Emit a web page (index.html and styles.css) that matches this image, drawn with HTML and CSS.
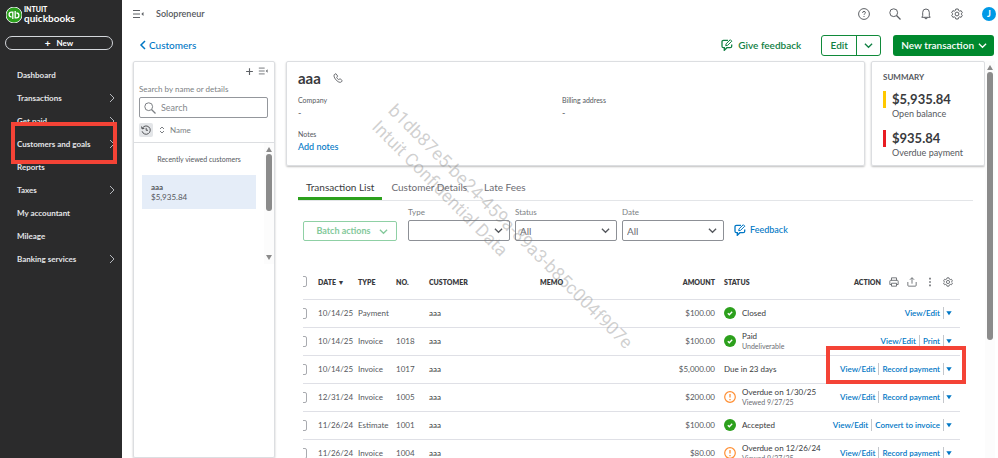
FILE: index.html
```
<!DOCTYPE html>
<html lang="en">
<head>
  <meta charset="UTF-8">
  <meta name="viewport" content="width=device-width, initial-scale=1.0">
  <title>QuickBooks - Customers</title>
  <link rel="stylesheet" href="styles.css">
</head>
<body>
  <!-- icons -->
  <svg class="sprite" aria-hidden="true">
    <symbol id="chev-right" viewBox="0 0 10 10"><path d="M3 1l4 4-4 4"/></symbol>
    <symbol id="chev-left" viewBox="0 0 10 10"><path d="M7 1L3 5l4 4" stroke-width="1.500"/></symbol>
    <symbol id="chev-down" viewBox="0 0 10 10"><path d="M1 3l4 4 4-4" stroke-width="1.400"/></symbol>
    <symbol id="caret" viewBox="0 0 6 6"><path d="M0.300 1.200h5.400L3 5.200z" fill="currentColor" stroke="none"/></symbol>
    <symbol id="collapse" viewBox="0 0 12 10"><path d="M1 1.500h7M1 5h7M1 8.500h7"/><path d="M11.500 3v4L9.300 5z" fill="currentColor" stroke="none"/></symbol>
    <symbol id="search" viewBox="0 0 12 12"><circle cx="4.700" cy="4.700" r="3.900"/><path d="M7.500 7.500l4 4" stroke-width="1.200"/></symbol>
    <symbol id="gear" viewBox="0 0 24 24"><circle cx="12" cy="12" r="3.800"/><path d="M9.600 2h4.800l.8 3 2.100 1.200 3-.8 2.400 4.100-2.200 2.200v.6l2.200 2.200-2.400 4.100-3-.8-2.100 1.200-.8 3H9.600l-.8-3-2.100-1.200-3 .8-2.400-4.100 2.200-2.200v-.6L1.300 9.500l2.400-4.100 3 .8L8.800 5z"/></symbol>
    <symbol id="feedback" viewBox="0 0 12 12"><path d="M7 1.300H2.500Q1 1.300 1 2.800v4.400q0 1.500 1.500 1.500h.8v2.600l2.600-2.600h3.300q1.500 0 1.500-1.500V5.500" stroke-width="1.300"/><path d="M4.700 6.700l.4-1.900L9.300.7l1.500 1.500-4.200 4.100z"/></symbol>
    <symbol id="done" viewBox="0 0 12 12"><circle cx="6" cy="6" r="6" fill="#2ca01c" stroke="none"/><path d="M3.800 6.200l1.500 1.500 2.900-3" stroke="#fff" stroke-width="1.300"/></symbol>
    <symbol id="warn" viewBox="0 0 12 12"><circle cx="6" cy="6" r="5.300" stroke="#ff8f33" stroke-width="1.200"/><path d="M6 2.900v3.700M6 8v1.200" stroke="#ff8f33" stroke-width="1.300"/></symbol>
  </svg>

  <aside class="sidebar">
    <div class="logo">
      <svg class="logo-mark" viewBox="0 0 16 16">
        <circle cx="8" cy="8" r="8" fill="#2ca01c"/>
        <path d="M6.800 12V5.200H5.500a2.300 2.300 0 0 0 0 4.800M9.200 4v6.800h1.300a2.300 2.300 0 0 0 0-4.800" stroke="#fff" stroke-width="1.300"/>
      </svg>
      <div class="logo-text"><span>INTUIT</span><strong>quickbooks</strong></div>
    </div>
    <button class="new-btn"><span>+</span> New</button>
    <nav>
      <ul class="menu">
        <li><a href="#">Dashboard</a></li>
        <li><a href="#">Transactions <svg><use href="#chev-right"/></svg></a></li>
        <li><a href="#">Get paid <svg><use href="#chev-right"/></svg></a></li>
        <li class="marked"><a href="#">Customers and goals <svg><use href="#chev-right"/></svg></a></li>
        <li><a href="#">Reports</a></li>
        <li><a href="#">Taxes <svg><use href="#chev-right"/></svg></a></li>
        <li><a href="#">My accountant</a></li>
        <li><a href="#">Mileage</a></li>
        <li><a href="#">Banking services <svg><use href="#chev-right"/></svg></a></li>
      </ul>
    </nav>
  </aside>

  <div class="app">
    <header class="topbar">
      <button class="icon-btn" aria-label="Collapse menu"><svg class="ic-12"><use href="#collapse"/></svg></button>
      <span class="company">Solopreneur</span>
      <div class="tools">
        <button class="icon-btn" aria-label="Help"><svg class="ic-12" viewBox="0 0 12 12"><circle cx="6" cy="6" r="5.400"/><path d="M4.600 4.900q0-1.500 1.400-1.500t1.400 1.300q0 .8-.8 1.200-.6.300-.6.900M6 8v1"/></svg></button>
        <button class="icon-btn" aria-label="Search"><svg class="ic-12"><use href="#search"/></svg></button>
        <button class="icon-btn" aria-label="Notifications"><svg class="ic-12" viewBox="0 0 12 12"><path d="M1.800 9.300h8.400L9.300 7.800V4.300a3.300 3.300 0 0 0-6.600 0v3.500zM4.700 9.500a1.300 1.300 0 0 0 2.600 0"/></svg></button>
        <button class="icon-btn" aria-label="Settings"><svg class="ic-12 thin"><use href="#gear"/></svg></button>
        <button class="avatar">J</button>
      </div>
    </header>

    <div class="page-head">
      <a class="back" href="#"><svg><use href="#chev-left"/></svg>Customers</a>
      <div class="head-actions">
        <a class="give-feedback" href="#"><svg class="ic-12"><use href="#feedback"/></svg>Give feedback</a>
        <div class="split">
          <button>Edit</button>
          <button aria-label="More edit options"><svg class="ic-8"><use href="#chev-down"/></svg></button>
        </div>
        <button class="primary">New transaction <svg class="ic-8"><use href="#chev-down"/></svg></button>
      </div>
    </div>

    <div class="content">
      <section class="card customers">
        <div class="customers-tools">
          <button class="icon-btn" aria-label="Add customer"><svg class="ic-8" viewBox="0 0 8 8"><path d="M4 1v6M1 4h6"/></svg></button>
          <button class="icon-btn" aria-label="Collapse list"><svg class="ic-10"><use href="#collapse"/></svg></button>
        </div>
        <div class="search">
          <label for="search">Search by name or details</label>
          <div class="search-box">
            <svg class="ic-12"><use href="#search"/></svg>
            <input type="text" id="search" placeholder="Search">
          </div>
        </div>
        <div class="sort">
          <button class="history" aria-label="Recent"><svg class="ic-10" viewBox="0 0 12 12"><path d="M1.500 4.200A5 5 0 1 1 1.300 7.500M.6 1.800l.7 2.800 2.700-.5M6.200 3.500v2.800h2.200"/></svg></button>
          <button class="sort-name"><svg class="ic-6" viewBox="0 0 6 8"><path d="M1 3l2-2 2 2M1 5l2 2 2-2"/></svg>Name</button>
        </div>
        <div class="list">
          <div class="list-body">
            <p>Recently viewed customers</p>
            <a class="customer" href="#"><strong>aaa</strong><span>$5,935.84</span></a>
          </div>
          <div class="scroll"><i class="arrow up"></i><i class="thumb"></i><i class="arrow down"></i></div>
        </div>
      </section>

      <main class="details">
        <div class="cards">
          <section class="card info">
            <div class="name">
              <h1>aaa</h1>
              <svg class="ic-10" viewBox="0 0 12 12"><path d="M3.500.8L1.500 2q-1 1.200.5 4 2 3.600 5 4.900 2 .8 3.100-.3l1-1.400-2.600-2.300-1.700 1q-1.600-.8-2.400-2.700l1.200-1.500z"/></svg>
            </div>
            <dl class="fields">
              <div><dt>Company</dt><dd>-</dd></div>
              <div><dt>Billing address</dt><dd>-</dd></div>
              <div><dt>Notes</dt><dd><a href="#">Add notes</a></dd></div>
            </dl>
          </section>
          <section class="card summary">
            <h2>SUMMARY</h2>
            <div class="sum open"><strong>$5,935.84</strong><span>Open balance</span></div>
            <div class="sum overdue"><strong>$935.84</strong><span>Overdue payment</span></div>
          </section>
        </div>

        <div class="tabs">
          <button class="active">Transaction List</button>
          <button>Customer Details</button>
          <button>Late Fees</button>
        </div>

        <div class="filters">
          <button class="batch" disabled>Batch actions <svg class="ic-8"><use href="#chev-down"/></svg></button>
          <div class="field">
            <label for="type">Type</label>
            <div class="select"><select id="type"><option></option></select><svg class="ic-8"><use href="#chev-down"/></svg></div>
          </div>
          <div class="field">
            <label for="status">Status</label>
            <div class="select"><select id="status"><option>All</option></select><svg class="ic-8"><use href="#chev-down"/></svg></div>
          </div>
          <div class="field">
            <label for="date">Date</label>
            <div class="select"><select id="date"><option>All</option></select><svg class="ic-8"><use href="#chev-down"/></svg></div>
          </div>
          <a class="feedback" href="#"><svg class="ic-12"><use href="#feedback"/></svg>Feedback</a>
        </div>

        <table class="transactions">
          <colgroup>
            <col class="c-check"><col class="c-date"><col class="c-type"><col class="c-no"><col class="c-customer"><col><col class="c-amount"><col class="c-status"><col class="c-action">
          </colgroup>
          <thead>
            <tr>
              <th class="check"><input type="checkbox" aria-label="Select all"></th>
              <th>DATE <small>▼</small></th>
              <th>TYPE</th>
              <th>NO.</th>
              <th>CUSTOMER</th>
              <th>MEMO</th>
              <th class="amount">AMOUNT</th>
              <th class="status">STATUS</th>
              <th>
                <div class="action-head">ACTION
                  <button class="icon-btn" aria-label="Print"><svg class="ic-10" viewBox="0 0 12 12"><path d="M3 4V1h6v3M3 9H1V5q0-1 1-1h8q1 0 1 1v4H9M3 7.500h6V11H3z"/></svg></button>
                  <button class="icon-btn" aria-label="Export"><svg class="ic-10" viewBox="0 0 12 12"><path d="M6 8V1M3.500 3.300L6 .8l2.500 2.500M1 6v4q0 1 1 1h8q1 0 1-1V6"/></svg></button>
                  <button class="icon-btn" aria-label="More"><svg class="ic-10" viewBox="0 0 12 12"><path d="M6 1v2M6 5v2M6 9v2" stroke-width="1.800"/></svg></button>
                  <button class="icon-btn" aria-label="Table settings"><svg class="ic-10 thin"><use href="#gear"/></svg></button>
                </div>
              </th>
            </tr>
          </thead>
          <tbody>
            <tr>
              <td class="check"><input type="checkbox" aria-label="Select payment"></td>
              <td>10/14/25</td><td>Payment</td><td></td><td class="dark">aaa</td><td></td>
              <td class="amount">$100.00</td>
              <td class="status"><div><svg class="ic-12"><use href="#done"/></svg><p>Closed</p></div></td>
              <td class="action"><div><a href="#">View/Edit</a><button aria-label="More actions"><svg><use href="#caret"/></svg></button></div></td>
            </tr>
            <tr>
              <td class="check"><input type="checkbox" aria-label="Select invoice 1018"></td>
              <td>10/14/25</td><td>Invoice</td><td>1018</td><td class="dark">aaa</td><td></td>
              <td class="amount">$100.00</td>
              <td class="status"><div><svg class="ic-12"><use href="#done"/></svg><p>Paid<small>Undeliverable</small></p></div></td>
              <td class="action"><div><a href="#">View/Edit</a><a href="#">Print</a><button aria-label="More actions"><svg><use href="#caret"/></svg></button></div></td>
            </tr>
            <tr>
              <td class="check"><input type="checkbox" aria-label="Select invoice 1017"></td>
              <td>10/14/25</td><td>Invoice</td><td>1017</td><td class="dark">aaa</td><td></td>
              <td class="amount">$5,000.00</td>
              <td class="status"><div><p>Due in 23 days</p></div></td>
              <td class="action marked"><div><a href="#">View/Edit</a><a href="#">Record payment</a><button aria-label="More actions"><svg><use href="#caret"/></svg></button></div></td>
            </tr>
            <tr>
              <td class="check"><input type="checkbox" aria-label="Select invoice 1005"></td>
              <td>12/31/24</td><td>Invoice</td><td>1005</td><td class="dark">aaa</td><td></td>
              <td class="amount">$200.00</td>
              <td class="status"><div><svg class="ic-12"><use href="#warn"/></svg><p>Overdue on 1/30/25<small>Viewed 9/27/25</small></p></div></td>
              <td class="action"><div><a href="#">View/Edit</a><a href="#">Record payment</a><button aria-label="More actions"><svg><use href="#caret"/></svg></button></div></td>
            </tr>
            <tr>
              <td class="check"><input type="checkbox" aria-label="Select estimate 1001"></td>
              <td>11/26/24</td><td>Estimate</td><td>1001</td><td class="dark">aaa</td><td></td>
              <td class="amount">$100.00</td>
              <td class="status"><div><svg class="ic-12"><use href="#done"/></svg><p>Accepted</p></div></td>
              <td class="action"><div><a href="#">View/Edit</a><a href="#">Convert to invoice</a><button aria-label="More actions"><svg><use href="#caret"/></svg></button></div></td>
            </tr>
            <tr>
              <td class="check"><input type="checkbox" aria-label="Select invoice 1004"></td>
              <td>11/26/24</td><td>Invoice</td><td>1004</td><td class="dark">aaa</td><td></td>
              <td class="amount">$80.00</td>
              <td class="status"><div><svg class="ic-12"><use href="#warn"/></svg><p>Overdue on 12/26/24<small>Viewed 9/27/25</small></p></div></td>
              <td class="action"><div><a href="#">View/Edit</a><a href="#">Record payment</a><button aria-label="More actions"><svg><use href="#caret"/></svg></button></div></td>
            </tr>
          </tbody>
        </table>
      </main>

      <div class="scroll page-scroll"><i class="arrow up"></i><i class="thumb"></i></div>
    </div>
  </div>

  <div class="watermark">b1db87e5-be24-459a-89a3-b85c004f907e<br>Intuit Confidential Data</div>
</body>
</html>
```
FILE: styles.css
```
* {
  box-sizing: border-box;
}

body {
  margin: 0;
  height: 100vh;
  display: flex;
  overflow: hidden;
  background: #fff;
  color: #55585d;
  font-family: Lato, "Open Sans", sans-serif;
  font-size: 9px;
  line-height: 12px;
}

h1, h2, p, dl, dd, ul {
  margin: 0;
  padding: 0;
}

a {
  color: #0077c5;
  text-decoration: none;
}

button, input, select {
  font: inherit;
  color: inherit;
}

button {
  display: flex;
  align-items: center;
  justify-content: center;
  padding: 0;
  border: none;
  background: none;
  cursor: pointer;
}

svg {
  flex: none;
  width: 10px;
  height: 10px;
  fill: none;
  stroke: currentColor;
}

.sprite {
  position: absolute;
  width: 0;
  height: 0;
}

.ic-6 { width: 6px; height: 8px; }
.ic-8 { width: 9px; height: 9px; }
.ic-10 { width: 10px; height: 10px; }
.ic-12 { width: 12px; height: 12px; }
.thin { stroke-width: 2; }

/* sidebar */
.sidebar {
  flex: none;
  width: 122px;
  background: #2b2b2c;
  color: #e3e5e8;
}

.logo {
  display: flex;
  gap: 2px;
  padding: 5px 6px 0;
}

.logo-mark {
  width: 16px;
  height: 16px;
  margin-top: 2px;
}

.logo-text {
  display: flex;
  flex-direction: column;
  color: #fff;
  font-size: 10px;
  line-height: 10px;
}

.logo-text span {
  font-size: 7px;
  font-weight: 900;
  line-height: 8px;
}

.new-btn {
  width: calc(100% - 14px);
  height: 14px;
  margin: 13px 8px 0 5px;
  gap: 6px;
  border: 1px solid #d4d7dc;
  border-radius: 7px;
  color: #fff;
  font-size: 8px;
  font-weight: 700;
}

.new-btn span {
  font-size: 10px;
}

.menu {
  margin-top: 13px;
  list-style: none;
}

.menu li {
  position: relative;
}

.menu a {
  display: flex;
  align-items: center;
  justify-content: space-between;
  height: 23px;
  padding: 0 5px 0 17px;
  color: inherit;
  font-size: 8px;
  font-weight: 700;
}

.menu svg {
  color: #b5b8bd;
}

.marked::after {
  content: "";
  position: absolute;
  border: 4px solid #f44336;
}

.menu .marked::after {
  inset: -10px 5px -9px 11px;
}

/* top of the page */
.app {
  flex: 1;
  min-width: 0;
  display: flex;
  flex-direction: column;
}

.topbar {
  display: flex;
  align-items: center;
  height: 27px;
  padding: 0 2px 0 10px;
  font-weight: 600;
}

.company {
  margin-left: 12px;
}

.icon-btn {
  color: #5d6065;
}

.tools {
  display: flex;
  align-items: center;
  gap: 19px;
  margin-left: auto;
}

.avatar {
  width: 14px;
  height: 14px;
  border-radius: 50%;
  background: #0099e6;
  color: #fff;
  font-weight: 700;
}

.page-head {
  display: flex;
  align-items: center;
  justify-content: space-between;
  height: 34px;
  padding: 2px 4px 0 16px;
}

.back {
  display: flex;
  align-items: center;
  gap: 1px;
  font-size: 10px;
  font-weight: 500;
}

.head-actions {
  display: flex;
  align-items: center;
  font-size: 10px;
  font-weight: 600;
}

.give-feedback {
  display: flex;
  align-items: center;
  gap: 5px;
  margin-right: 20px;
  color: #108043;
}

.split {
  display: flex;
  margin-right: 12px;
  border: 1px solid #108a3a;
  border-radius: 3px;
  color: #108043;
}

.split button {
  height: 19px;
  width: 23px;
}

.split button:first-child {
  width: 35px;
  border-right: 1px solid #108a3a;
}

.primary {
  height: 21px;
  padding: 0 7px 0 8px;
  gap: 4px;
  border-radius: 3px;
  background: #00892e;
  color: #fff;
}

/* content */
.content {
  flex: 1;
  min-height: 0;
  display: flex;
  padding-left: 11px;
}

.card {
  border: 1px solid #dcdee1;
  border-radius: 2px;
  box-shadow: 0 1px 2px rgba(0, 0, 0, 0.25);
}

.customers {
  flex: none;
  width: 142px;
  margin-right: 11px;
}

.customers-tools {
  display: flex;
  justify-content: flex-end;
  gap: 4px;
  padding: 4px 6px 0;
}

.search {
  padding: 7px 6px 0 5px;
  color: #7c7f84;
  font-size: 8px;
}

.search-box {
  display: flex;
  align-items: center;
  gap: 5px;
  height: 21px;
  margin-top: 2px;
  padding: 0 4px;
  border: 1px solid #94979c;
  border-radius: 2px;
}

.search-box input {
  width: 100%;
  padding: 0;
  border: none;
  outline: none;
  background: none;
  font-size: 9px;
}

.search-box input::placeholder {
  color: #85888d;
}

.sort {
  display: flex;
  align-items: center;
  gap: 6px;
  height: 25px;
  padding: 0 5px;
  border-bottom: 1px solid #dcdee1;
  color: #7c7f84;
  font-size: 8px;
}

.history {
  width: 14px;
  height: 14px;
  border-radius: 2px;
  background: #e3e5e8;
  color: #393a3d;
}

.sort-name {
  gap: 5px;
}

.list {
  display: flex;
  height: 121px;
}

.list-body {
  flex: 1;
  padding: 10px 8px;
}

.list-body p {
  text-align: center;
  font-size: 7px;
}

.customer {
  display: flex;
  flex-direction: column;
  margin-top: 10px;
  padding: 7px 9px;
  background: #e5edf8;
  color: #55585d;
  font-size: 8px;
  line-height: 10px;
}

/* drawn scrollbars */
.scroll {
  display: flex;
  flex-direction: column;
  align-items: center;
  flex: none;
  width: 10px;
  padding: 4px 0;
  gap: 2px;
  background: #fcfcfc;
}

.thumb {
  width: 6px;
  height: 50%;
  border-radius: 3px;
  background: #8b8b8b;
}

.arrow {
  border: 3px solid transparent;
}

.arrow.up {
  border-top: none;
  border-bottom: 5px solid #8b8b8b;
}

.arrow.down {
  margin-top: auto;
  border-bottom: none;
  border-top: 5px solid #8b8b8b;
}

.page-scroll {
  margin-right: 3px;
}

.page-scroll .thumb {
  height: 69%;
}

/* customer details */
.details {
  flex: 1;
  min-width: 0;
}

.cards {
  display: flex;
  gap: 6px;
}

.info {
  flex: 1;
  padding: 7px 11px 11px;
}

.name {
  display: flex;
  align-items: center;
  gap: 12px;
}

.name h1 {
  color: #393a3d;
  font-size: 15px;
  line-height: 18px;
}

.fields {
  display: grid;
  grid-template-columns: 264px 1fr;
  row-gap: 9px;
  margin-top: 7px;
}

.fields dt {
  font-size: 7px;
}

.fields dd {
  line-height: 13px;
}

.fields a {
  font-weight: 500;
}

.summary {
  width: 114px;
  padding: 9px 11px 6px;
}

.summary h2 {
  color: #55585d;
  font-size: 8px;
  font-weight: 700;
}

.sum {
  display: flex;
  flex-direction: column;
  margin-top: 8px;
  padding-left: 9px;
  background: linear-gradient(#ffc800, #ffc800) no-repeat left top / 3px 17px;
}

.sum.overdue {
  margin-top: 10px;
  background-image: linear-gradient(#e81c23, #e81c23);
}

.sum strong {
  color: #393a3d;
  font-size: 13px;
  line-height: 17px;
}

.tabs {
  display: flex;
  gap: 1px;
  margin: 11px 12px 0;
  border-bottom: 1px solid #e3e5e8;
}

.tabs button {
  height: 23px;
  padding: 0 8px;
  border-bottom: 3px solid transparent;
  color: #6b6c72;
  font-size: 10px;
}

.tabs .active {
  border-color: #2ca01c;
  color: #393a3d;
}

.filters {
  display: flex;
  align-items: flex-end;
  gap: 5px;
  padding: 5px 17px 0;
}

.batch {
  width: 94px;
  height: 20px;
  gap: 8px;
  margin-right: 6px;
  padding-left: 4px;
  border: 1px solid #8fd0a5;
  border-radius: 2px;
  color: #84c99b;
  font-size: 9px;
  font-weight: 700;
}

.field {
  width: 102px;
}

.field label {
  display: block;
  margin-bottom: 2px;
  color: #7c7f84;
  font-size: 8px;
}

.select {
  position: relative;
}

.select select {
  display: block;
  width: 100%;
  height: 21px;
  padding: 0 4px;
  appearance: none;
  border: 1px solid #8d9096;
  border-radius: 2px;
  background: #fff;
  color: #6b6c72;
  font-size: 10px;
}

.select svg {
  position: absolute;
  top: 6px;
  right: 7px;
  pointer-events: none;
}

.feedback {
  display: flex;
  align-items: center;
  gap: 4px;
  margin: 0 0 5px 5px;
  font-weight: 500;
}

/* transactions */
.transactions {
  width: calc(100% - 42px);
  margin: 24px 25px 0 17px;
  border-collapse: collapse;
  table-layout: fixed;
  font-size: 8px;
}

.c-check { width: 15px; }
.c-date { width: 40px; }
.c-type { width: 38px; }
.c-no { width: 33px; }
.c-customer { width: 111px; }
.c-amount { width: 60px; }
.c-status { width: 105px; }
.c-action { width: 140px; }

.transactions th,
.transactions td {
  height: 28px;
  padding: 0;
  border-bottom: 1px solid #dfe0e6;
  text-align: left;
  white-space: nowrap;
}

.transactions th {
  height: 34px;
  color: #393a3d;
  font-size: 7px;
  font-weight: 800;
}

.transactions th small {
  font-size: 7px;
}

.transactions .check {
  overflow: hidden;
}

.check input {
  display: block;
  width: 11px;
  height: 11px;
  margin: 0 0 0 -7px;
  appearance: none;
  border: 1px solid #a9abb0;
  border-radius: 2px;
}

.transactions .amount {
  text-align: right;
}

.transactions .status {
  padding-left: 9px;
}

.status div {
  display: flex;
  align-items: center;
  gap: 6px;
  color: #393a3d;
  font-size: 8px;
  line-height: 10px;
}

.status small {
  display: block;
  color: #6b6c72;
  font-size: 7px;
}

.dark {
  color: #393a3d;
}

.action-head,
.action div {
  display: flex;
  align-items: center;
  justify-content: flex-end;
}

.action-head {
  gap: 8px;
  padding-right: 7px;
}

.action {
  position: relative;
}

.action div {
  padding-right: 6px;
  font-weight: 600;
}

.action a {
  padding: 0 3px;
  border-right: 1px solid #c4c7cc;
}

.action button {
  width: 10px;
  color: #0077c5;
}

.action svg {
  width: 6px;
  height: 6px;
}

.action.marked::after {
  inset: -10px -6px -1px 6px;
}

.watermark {
  position: absolute;
  top: 99px;
  left: 400px;
  transform: rotate(45deg);
  transform-origin: left top;
  color: rgba(120, 120, 120, 0.35);
  font-family: Roboto, "Liberation Sans", sans-serif;
  font-size: 18px;
  line-height: 23px;
  white-space: nowrap;
  pointer-events: none;
}
```
